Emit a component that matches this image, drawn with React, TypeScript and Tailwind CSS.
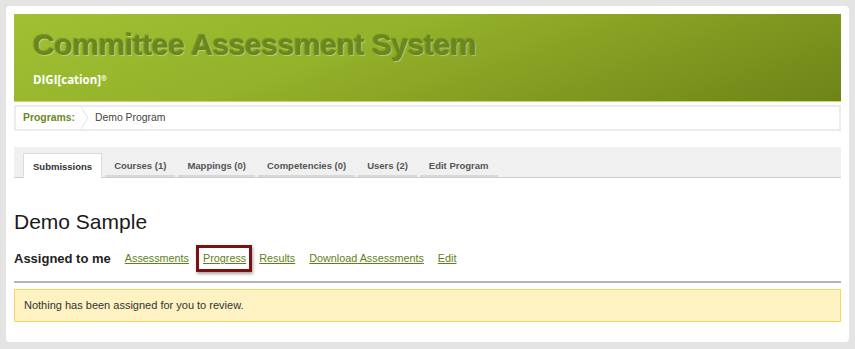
const tabs = ["Courses (1)", "Mappings (0)", "Competencies (0)", "Users (2)", "Edit Program"];
const links = ["Assessments", "Progress", "Results", "Download Assessments", "Edit"];

export default function App() {
  return (
    <div className="h-[349px] bg-[#e4e4e4] p-[6px] font-['Liberation_Sans',Arial,sans-serif]">
      <div className="h-[336px] rounded-[4px] bg-white px-[8px] pt-[8px]">
        {/* banner */}
        <div className="h-[88px] border-b border-[#c4da6a] bg-[linear-gradient(160deg,#a2c033_0%,#94b22a_40%,#88a023_62%,#6e8418_100%)] px-[19px] pt-[13px]">
          <h1 className="text-[30px] font-bold leading-[36px] tracking-[-0.4px] text-[#6a871c] [text-shadow:1px_1px_1px_rgba(255,255,255,0.35),-1px_-1px_1px_rgba(60,80,10,0.4)]">
            Committee Assessment System
          </h1>
          <div className="mt-[8px] font-['Open_Sans',sans-serif] text-[11.5px] font-bold text-white">
            DIGI[cation]<sup className="text-[7px]">®</sup>
          </div>
        </div>

        {/* breadcrumb */}
        <div className="mt-[3px] flex h-[26px] items-center border-2 border-[#ececec] text-[10.4px]">
          <span className="pl-[7px] pr-[6px] font-bold text-[#6b8a24]">Programs:</span>
          <svg width="8" height="22" viewBox="0 0 8 22" className="shrink-0">
            <path d="M0 0 L7 11 L0 22" fill="none" stroke="#e2e2e2" strokeWidth="1" />
          </svg>
          <span className="pl-[6px] text-[#444]">Demo Program</span>
        </div>

        {/* tabs */}
        <div className="mt-[16px] flex h-[31px] items-end border-b border-[#cfcfcf] bg-[#f0f0f0] pl-[9px] text-[9.5px] font-bold text-[#555]">
          <div className="-mb-px flex h-[25px] items-center border border-b-0 border-[#dcdcdc] bg-white px-[9px] pt-[2px] text-[#333]">
            Submissions
          </div>
          {tabs.map((t) => (
            <div key={t} className="ml-[3px] flex h-[25px] items-center border-b-2 border-[#d8d8d8] px-[9px] pt-[6px]">
              {t}
            </div>
          ))}
        </div>

        <h2 className="mt-[32px] text-[21px] leading-[24px] text-[#1a1a1a]">Demo Sample</h2>

        <div className="mt-[12px] flex h-[25px] items-center">
          <span className="text-[13px] font-bold text-[#222]">Assigned to me</span>
          <div className="ml-[14px] flex items-center gap-[14px] text-[10.8px] text-[#5f7f1a]">
            {links.map((l) =>
              l === "Progress" ? (
                <span
                  key={l}
                  className="-mx-[7px] border-[3px] border-[#7b1111] py-[2px] pl-[4px] pr-[3px] shadow-[1px_2px_3px_rgba(0,0,0,0.35)]"
                >
                  <a className="underline">{l}</a>
                </span>
              ) : (
                <a key={l} className="underline">
                  {l}
                </a>
              )
            )}
          </div>
        </div>

        <div className="mt-[10px] h-[2px] bg-[#b5b5b5]" />

        <div className="mt-[6px] flex h-[33px] items-center border border-[#f9d75c] bg-[#fef2c2] px-[9px] text-[11px] text-[#333]">
          Nothing has been assigned for you to review.
        </div>
      </div>
    </div>
  );
}
